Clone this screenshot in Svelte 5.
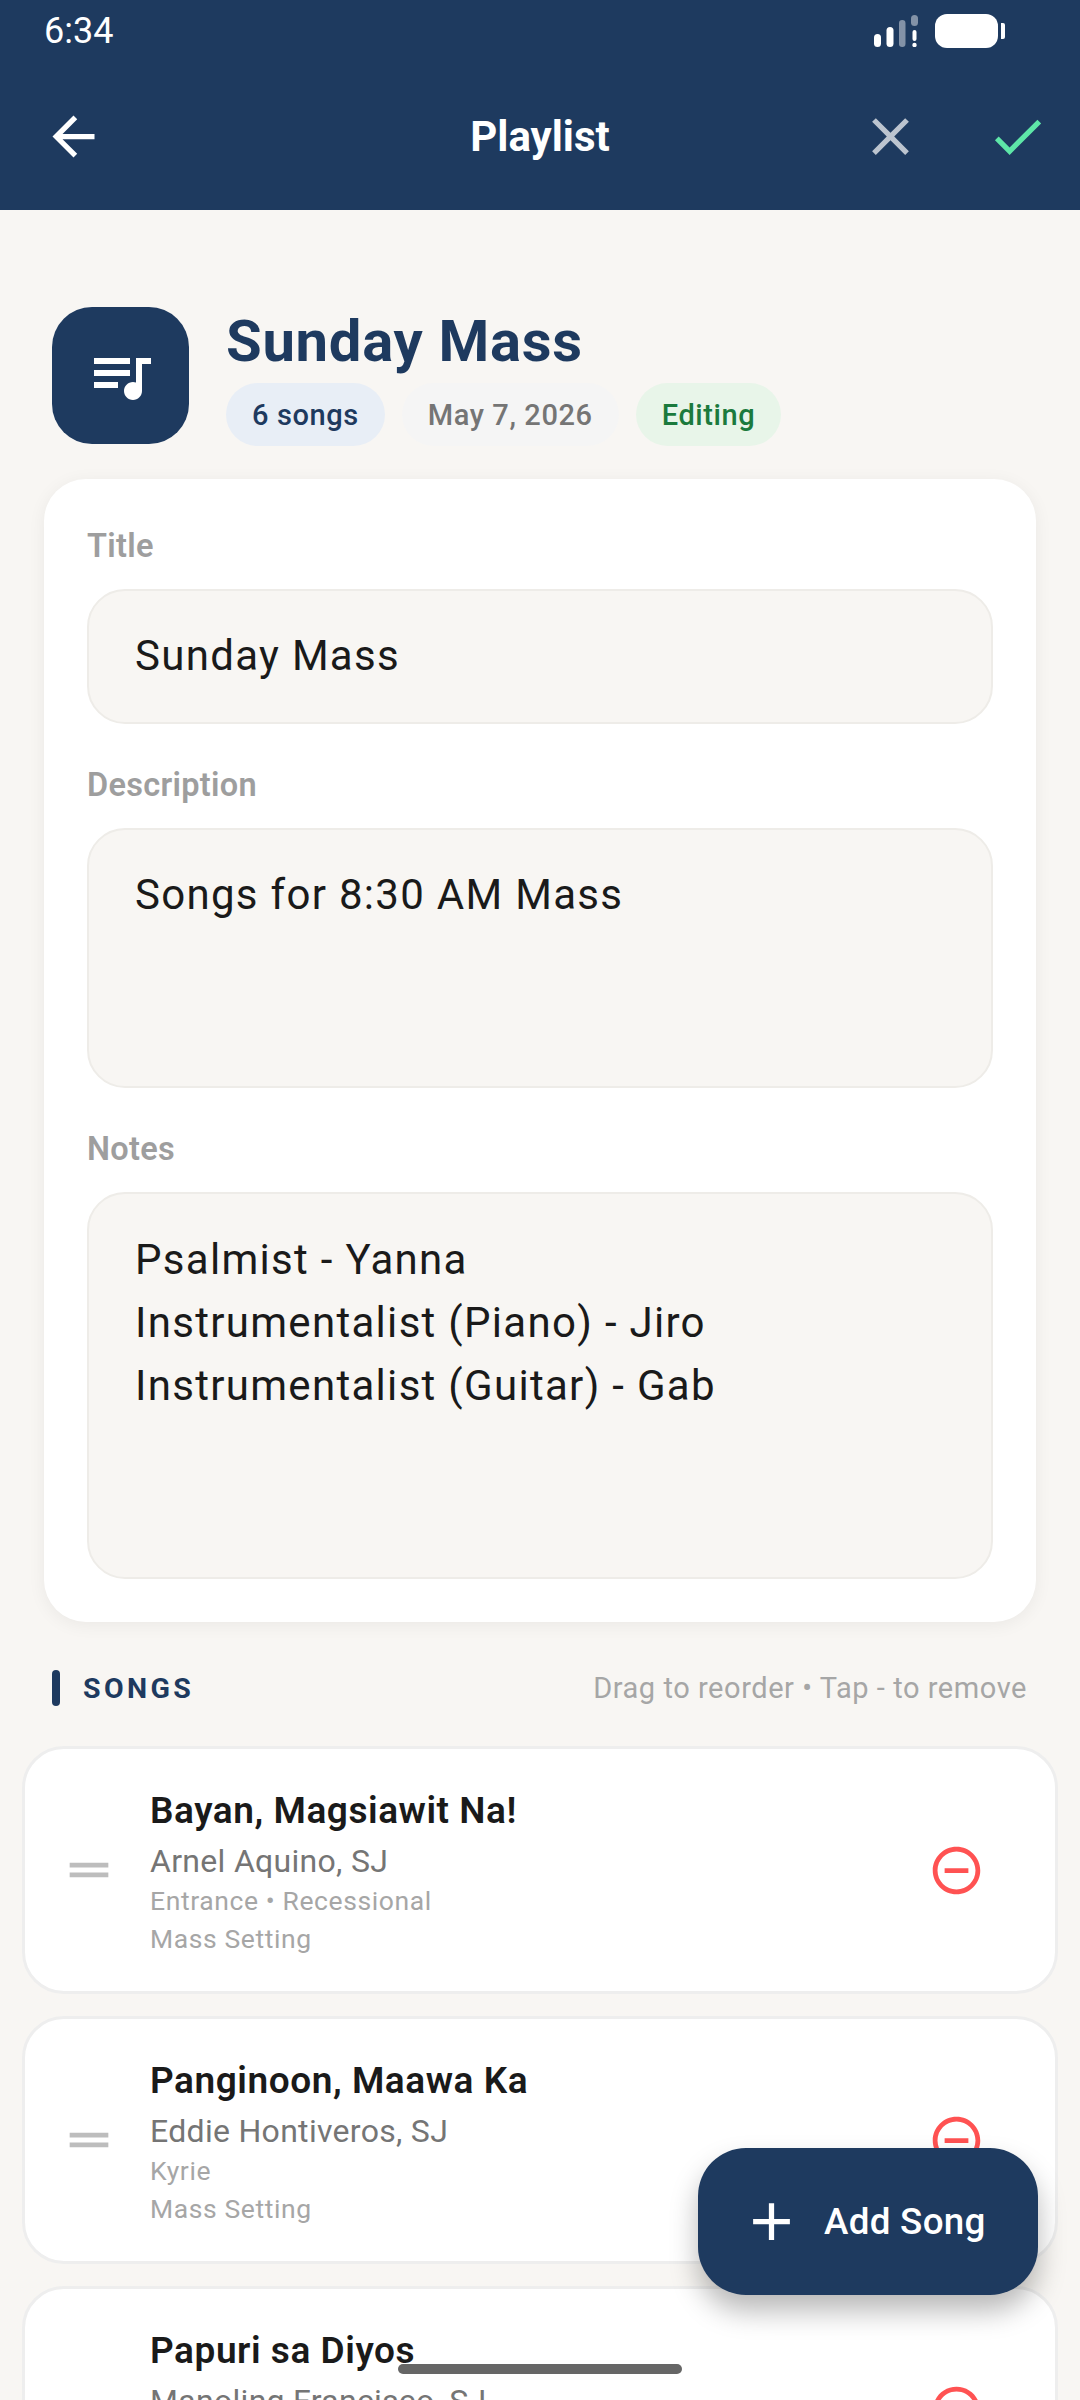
<script>
  const songs = [
    { title: 'Bayan, Magsiawit Na!', composer: 'Arnel Aquino, SJ', parts: 'Entrance • Recessional', kind: 'Mass Setting' },
    { title: 'Panginoon, Maawa Ka', composer: 'Eddie Hontiveros, SJ', parts: 'Kyrie', kind: 'Mass Setting' },
    { title: 'Papuri sa Diyos', composer: 'Manoling Francisco, SJ', parts: 'Gloria', kind: 'Mass Setting' }
  ];
</script>

<div class="page">
  <header class="appbar">
    <div class="status">
      <span class="time">6:34</span>
      <div class="status-icons">
        <svg width="44" height="32" viewBox="0 0 44 32" fill="#fff">
          <rect x="0" y="19" width="7" height="13" rx="3.5" />
          <rect x="12.5" y="12" width="7" height="20" rx="3.5" />
          <rect x="25" y="5" width="6.5" height="27" rx="3.2" opacity="0.45" />
          <rect x="37" y="0" width="7" height="11" rx="3.5" opacity="0.45" />
          <rect x="38.5" y="15" width="4" height="11" rx="2" />
          <circle cx="40.5" cy="30" r="2.2" />
        </svg>
        <div class="battery"></div>
        <div class="battery-tip"></div>
      </div>
    </div>
    <div class="toolbar">
      <svg class="back" width="63" height="63" viewBox="0 0 24 24" fill="#fff"><path d="M20 11H7.83l5.59-5.59L12 4l-8 8 8 8 1.41-1.41L7.83 13H20v-2z" /></svg>
      <h1>Playlist</h1>
      <div class="actions">
        <svg width="63" height="63" viewBox="0 0 24 24" fill="#fff" fill-opacity="0.7"><path d="M19 6.41 17.59 5 12 10.59 6.41 5 5 6.41 10.59 12 5 17.59 6.41 19 12 13.41 17.59 19 19 17.59 13.41 12z" /></svg>
        <svg width="63" height="63" viewBox="0 0 24 24" fill="#5ee6a8"><path d="M9 16.17 4.83 12l-1.42 1.41L9 19 21 7l-1.41-1.41z" /></svg>
      </div>
    </div>
  </header>

  <main>
    <section class="summary">
      <div class="cover">
        <svg width="72" height="72" viewBox="0 0 24 24" fill="#fff"><path d="M15 6H3v2h12V6zm0 4H3v2h12v-2zM3 16h8v-2H3v2zM17 6v8.18c-.31-.11-.65-.18-1-.18-1.66 0-3 1.34-3 3s1.34 3 3 3 3-1.34 3-3V8h3V6h-5z" /></svg>
      </div>
      <div class="summary-text">
        <h2>Sunday Mass</h2>
        <div class="chips">
          <span class="chip blue">6 songs</span>
          <span class="chip grey">May 7, 2026</span>
          <span class="chip green">Editing</span>
        </div>
      </div>
    </section>

    <section class="form">
      <span class="label">Title</span>
      <div class="field one">Sunday Mass</div>
      <span class="label">Description</span>
      <div class="field desc">Songs for 8:30 AM Mass</div>
      <span class="label">Notes</span>
      <div class="field notes">Psalmist - Yanna<br />Instrumentalist (Piano) - Jiro<br />Instrumentalist (Guitar) - Gab</div>
    </section>

    <div class="songs-head">
      <span class="bar"></span>
      <span class="songs-title">SONGS</span>
      <span class="hint">Drag to reorder • Tap - to remove</span>
    </div>

    <div class="song-list">
      {#each songs as song}
        <article class="song">
          <svg class="drag" width="58" height="58" viewBox="0 0 24 24" fill="#bdbdbd"><path d="M20 9H4v2h16V9zm0 4H4v2h16v-2z" /></svg>
          <div class="song-text">
            <div class="song-title">{song.title}</div>
            <div class="composer">{song.composer}</div>
            <div class="meta first">{song.parts}</div>
            <div class="meta">{song.kind}</div>
          </div>
          <svg class="remove" width="57" height="57" viewBox="0 0 24 24" fill="#ff5252"><path d="M7 11v2h10v-2H7zm5-9C6.48 2 2 6.48 2 12s4.48 10 10 10 10-4.48 10-10S17.52 2 12 2zm0 18c-4.41 0-8-3.59-8-8s3.59-8 8-8 8 3.59 8 8-3.59 8-8 8z" /></svg>
        </article>
      {/each}
    </div>
  </main>

  <button class="fab" type="button">
    <svg width="63" height="63" viewBox="0 0 24 24" fill="#fff"><path d="M19 13h-6v6h-2v-6H5v-2h6V5h2v6h6v2z" /></svg>
    <span>Add Song</span>
  </button>
  <div class="home"></div>
</div>

<style>
  :global(body) {
    margin: 0;
    background: #f8f6f3;
  }

  .page {
    position: relative;
    width: 1080px;
    height: 2400px;
    overflow: hidden;
    background: #f8f6f3;
    font-family: Roboto, sans-serif;
    color: #1a1a1a;
  }

  .appbar {
    height: 210px;
    background: #1e3a5f;
    color: #fff;
  }

  .status {
    height: 62px;
    display: flex;
    align-items: center;
    justify-content: space-between;
    padding: 0 75px 0 44px;
  }

  .time {
    font-size: 36px;
  }

  .status-icons {
    display: flex;
    align-items: center;
  }

  .battery {
    width: 63px;
    height: 34px;
    margin-left: 17px;
    border-radius: 12px;
    background: #fff;
  }

  .battery-tip {
    width: 4px;
    height: 16px;
    margin-left: 3px;
    border-radius: 0 2px 2px 0;
    background: #fff;
  }

  .toolbar {
    height: 148px;
    display: grid;
    grid-template-columns: 1fr auto 1fr;
    align-items: center;
    padding: 0 31px;
  }

  .back {
    margin-left: 11px;
  }

  h1 {
    margin: 0;
    font-size: 42px;
    font-weight: 700;
  }

  .actions {
    display: flex;
    justify-content: flex-end;
    gap: 64px;
  }

  main {
    padding-top: 97px;
  }

  .summary {
    display: flex;
    gap: 37px;
    padding: 0 52px;
    height: 172px;
  }

  .cover {
    width: 137px;
    height: 137px;
    border-radius: 40px;
    background: #1e3a5f;
    display: flex;
    align-items: center;
    justify-content: center;
  }

  h2 {
    margin: 0;
    font-size: 58px;
    line-height: 68px;
    font-weight: 700;
    letter-spacing: 0.7px;
    color: #1e3a5f;
  }

  .chips {
    display: flex;
    gap: 17px;
    margin-top: 8px;
  }

  .chip {
    height: 63px;
    line-height: 65px;
    padding: 0 26px;
    border-radius: 32px;
    font-size: 29px;
    font-weight: 500;
    letter-spacing: 0.6px;
  }

  .blue {
    background: #e8eef6;
    color: #1e3a5f;
  }

  .grey {
    background: #f5f5f5;
    color: #757575;
  }

  .green {
    background: #e8f5e9;
    color: #1b7a3d;
  }

  .form {
    margin: 0 44px;
    padding: 47px 43px 42px;
    height: 1143px;
    box-sizing: border-box;
    background: #fff;
    border-radius: 42px;
    box-shadow: 0 3px 18px rgba(0, 0, 0, 0.06);
    display: flex;
    flex-direction: column;
  }

  .label {
    display: block;
    height: 38px;
    line-height: 40px;
    font-size: 32.5px;
    font-weight: 600;
    color: #9e9e9e;
    letter-spacing: 0.3px;
    margin-bottom: 25px;
  }

  .field {
    box-sizing: border-box;
    background: #f8f6f3;
    border: 2px solid #eeece8;
    border-radius: 38px;
    padding: 33px 46px;
    font-size: 42px;
    line-height: 63px;
    letter-spacing: 1.3px;
    color: #1a1a1a;
    margin-bottom: 41px;
    flex-shrink: 0;
  }

  .field.one {
    height: 135px;
  }

  .field.desc {
    height: 260px;
  }

  .field.notes {
    height: 387px;
    margin-bottom: 0;
    padding-top: 34px;
  }

  .songs-head {
    display: flex;
    align-items: center;
    margin: 48px 53px 40px 52px;
    height: 36px;
  }

  .bar {
    width: 8px;
    height: 36px;
    border-radius: 4px;
    background: #1e3a5f;
  }

  .songs-title {
    margin-left: 23px;
    font-size: 28.5px;
    font-weight: 700;
    letter-spacing: 3.4px;
    color: #1e3a5f;
  }

  .hint {
    margin-left: auto;
    font-size: 29px;
    letter-spacing: 0.55px;
    color: #a6a6a6;
  }

  .song-list {
    display: flex;
    flex-direction: column;
    gap: 22px;
    margin: 0 22px;
  }

  .song {
    display: flex;
    align-items: center;
    box-sizing: border-box;
    height: 248px;
    flex-shrink: 0;
    padding: 0 70px 0 35px;
    background: #fff;
    border: 3px solid #eeeeee;
    border-radius: 42px;
  }

  .drag {
    flex-shrink: 0;
  }

  .song-text {
    flex: 1;
    margin-left: 32px;
    padding-top: 5px;
  }

  .song-title {
    font-size: 37px;
    line-height: 46px;
    font-weight: 600;
    letter-spacing: 0.55px;
    color: #1a1a1a;
  }

  .composer {
    margin-top: 7px;
    font-size: 32px;
    line-height: 40px;
    letter-spacing: 0.3px;
    color: #757575;
  }

  .meta {
    font-size: 26.5px;
    line-height: 37.5px;
    letter-spacing: 0.6px;
    color: #a6a6a6;
  }

  .meta.first {
    margin-top: 1px;
  }

  .fab {
    position: absolute;
    left: 698px;
    top: 2148px;
    width: 340px;
    height: 147px;
    display: flex;
    align-items: center;
    padding: 0 0 0 42px;
    gap: 21px;
    border: none;
    border-radius: 48px;
    background: #1e3a5f;
    color: #fff;
    font-family: Roboto, sans-serif;
    font-size: 36.75px;
    font-weight: 500;
    letter-spacing: 0.3px;
    box-shadow: 0 16px 28px rgba(0, 0, 0, 0.28);
  }

  .home {
    position: absolute;
    left: 398px;
    top: 2364px;
    width: 284px;
    height: 10px;
    border-radius: 5px;
    background: #666;
  }
</style>
